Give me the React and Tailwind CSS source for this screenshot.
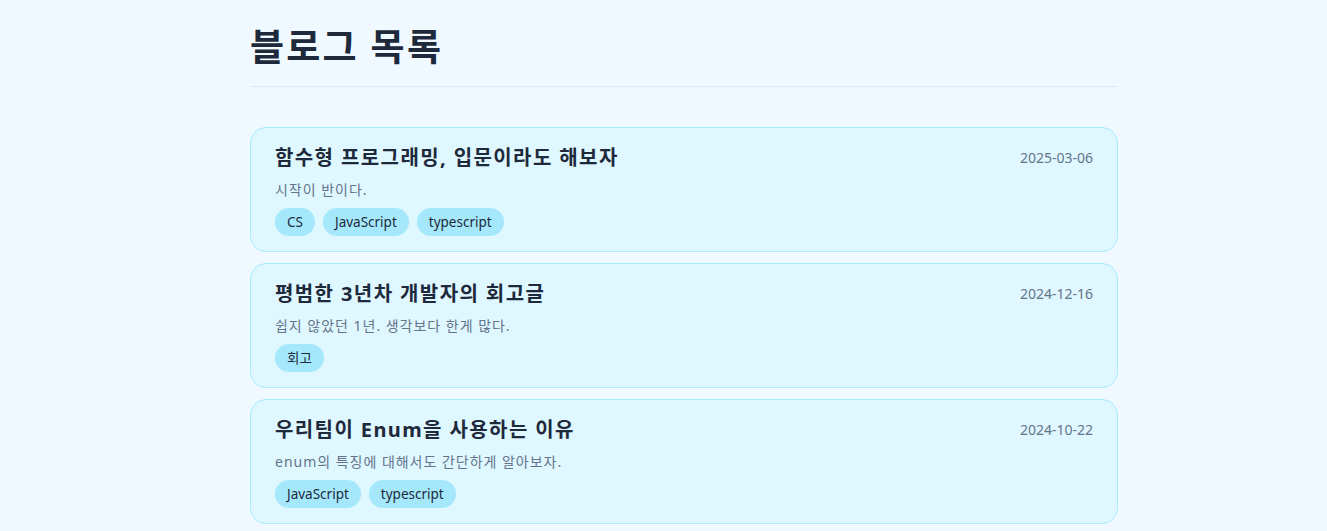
export default function App() {
  const posts = [
    { title: "함수형 프로그래밍, 입문이라도 해보자", date: "2025-03-06", desc: "시작이 반이다.", tags: ["CS", "JavaScript", "typescript"] },
    { title: "평범한 3년차 개발자의 회고글", date: "2024-12-16", desc: "쉽지 않았던 1년. 생각보다 한게 많다.", tags: ["회고"] },
    { title: "우리팀이 Enum을 사용하는 이유", date: "2024-10-22", desc: "enum의 특징에 대해서도 간단하게 알아보자.", tags: ["JavaScript", "typescript"] },
  ];
  return (
    <div className="min-h-[531px] bg-[#f0f9ff] text-[#1e293b]" style={{ fontFamily: '"Noto Sans", "Noto Sans CJK KR", sans-serif' }}>
      <div className="ml-[250px] w-[868px]">
        <h1 className="pt-[23px] pb-[15px] text-[37px] font-bold leading-[48px] tracking-[0.06em] border-b border-[#e2e8f0]">블로그 목록</h1>
        <div className="mt-[40px] flex flex-col gap-[11px]">
          {posts.map((p) => (
            <div key={p.title} className="rounded-2xl border border-[#a5eefc] bg-[#dff7ff] px-6 pt-4 pb-[15px]">
              <div className="flex items-center justify-between">
                <h2 className="text-[20px] font-bold leading-7 tracking-[0.07em] text-[#1e293b]">{p.title}</h2>
                <span className="text-sm text-[#64748b]">{p.date}</span>
              </div>
              <p className="mt-2 text-sm leading-5 tracking-[0.07em] text-[#64748b]">{p.desc}</p>
              <div className="mt-2 flex gap-2">
                {p.tags.map((t) => (
                  <span key={t} className="h-7 rounded-full bg-[#a5e8fc] px-3 text-[13.5px] leading-7 text-[#1e293b]">{t}</span>
                ))}
              </div>
            </div>
          ))}
        </div>
      </div>
    </div>
  );
}
